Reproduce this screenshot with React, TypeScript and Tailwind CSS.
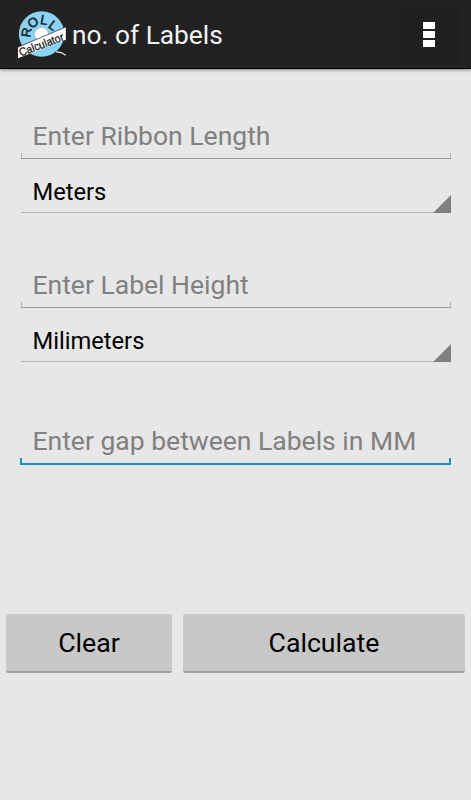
import clsx from "clsx";

type FieldProps = {
  placeholder: string;
  className?: string;
};

function RollLogo() {
  return (
    <svg
      width="50"
      height="50"
      viewBox="17 9 50 50"
      className="shrink-0 overflow-visible"
      aria-hidden="true"
    >
      <circle cx="41.6" cy="34" r="22.7" fill="#8bd2f3" />
      <circle cx="41.6" cy="34.5" r="7" fill="#fff" stroke="#a9a9a9" strokeWidth="0.6" />
      <g
        fill="#1c2a33"
        fontFamily="'Liberation Sans', sans-serif"
        fontSize="13"
        stroke="#1c2a33"
        strokeWidth="0.6"
        textAnchor="middle"
      >
        <text transform="translate(30.8 33.2) rotate(-80)">R</text>
        <text transform="translate(35.7 26) rotate(-36)">O</text>
        <text transform="translate(43.4 24.4) rotate(10)">L</text>
        <text transform="translate(50.3 29) rotate(38)">L</text>
      </g>
      <path d="M18 47.2 65.8 27V39.8L18 58.2Z" fill="#fff" />
      <path d="M18 47.2 65.8 27" fill="none" stroke="#222" strokeWidth="0.7" />
      <text
        transform="translate(20.8 56.6) rotate(-20.8)"
        fill="#111"
        fontFamily="'Liberation Sans', sans-serif"
        fontSize="11.4"
        stroke="#111"
        strokeWidth="0.25"
        textLength="47"
        lengthAdjust="spacingAndGlyphs"
      >
        Calculator
      </text>
      <path d="M56 52C60 51.5 63 53 65.8 55.3" fill="none" stroke="#fff" strokeWidth="1.1" />
    </svg>
  );
}

function ActionBar() {
  return (
    <header className="flex h-[69px] items-center border-b border-black bg-[#222] pl-[17px] shadow-[0_1px_3px_rgba(0,0,0,0.45)]">
      <RollLogo />
      <h1 className="mt-0.5 ml-[5px] text-[26.3px] leading-8 text-[#f3f3f3]">no. of Labels</h1>
      <button
        type="button"
        aria-label="More options"
        className="mr-3 ml-auto flex h-[60px] w-[61px] flex-col items-center justify-center gap-0.5 bg-[#202020]"
      >
        <span className="h-[7px] w-3 bg-white" />
        <span className="h-[7px] w-3 bg-white" />
        <span className="h-[7px] w-3 bg-white" />
      </button>
    </header>
  );
}

function Field({ placeholder, className }: FieldProps) {
  return (
    <div className={clsx("mx-5 flex h-12 flex-col justify-end text-[26.5px] text-[#808080]", className)}>
      <p className="pb-[1px] pl-[12.5px] leading-8 whitespace-nowrap">{placeholder}</p>
      <div className="ml-px h-1.5 border-x border-b border-x-[#b0b0b0] border-b-[#999]" />
    </div>
  );
}

function FocusedField({ placeholder, className }: FieldProps) {
  return (
    <div className={clsx("mx-5 flex h-12 flex-col justify-end text-[26.5px] text-[#808080]", className)}>
      <p className="pb-px pl-[12.5px] leading-8 whitespace-nowrap">{placeholder}</p>
      <div className="h-[7px] border-x-2 border-b-2 border-[#1591cc]" />
    </div>
  );
}

function Spinner({ value }: { value: string }) {
  return (
    <button
      type="button"
      className="mr-5 ml-[21px] flex h-[54px] items-end justify-between border-b border-[#b5b5b5] pl-[11.5px] text-[23.7px] text-black"
    >
      <span className="pb-1 leading-8">{value}</span>
      <svg width="18" height="18" viewBox="0 0 18 18" className="-mb-px" aria-hidden="true">
        <path d="M18 0V18H0Z" fill="#808080" />
      </svg>
    </button>
  );
}

export default function App() {
  return (
    <div className="flex h-[800px] w-[471px] flex-col overflow-hidden bg-[#e7e7e7] font-['Roboto','Noto_Sans',sans-serif]">
      <ActionBar />
      <main className="flex flex-col">
        <Field placeholder="Enter Ribbon Length" className="mt-[42px]" />
        <Spinner value="Meters" />
        <Field placeholder="Enter Label Height" className="mt-[47px]" />
        <Spinner value="Milimeters" />
        <FocusedField placeholder="Enter gap between Labels in MM" className="mt-[55px]" />
        <div className="mt-[149px] flex gap-[11px] px-1.5 text-[26.7px] text-black">
          <button
            type="button"
            className="h-[59px] w-[166px] rounded-[2px] border-b-2 border-[#a0a0a0] bg-[#c8c8c8] pt-0.5"
          >
            Clear
          </button>
          <button
            type="button"
            className="h-[59px] flex-1 rounded-[2px] border-b-2 border-[#a0a0a0] bg-[#c8c8c8] pt-0.5"
          >
            Calculate
          </button>
        </div>
      </main>
    </div>
  );
}
